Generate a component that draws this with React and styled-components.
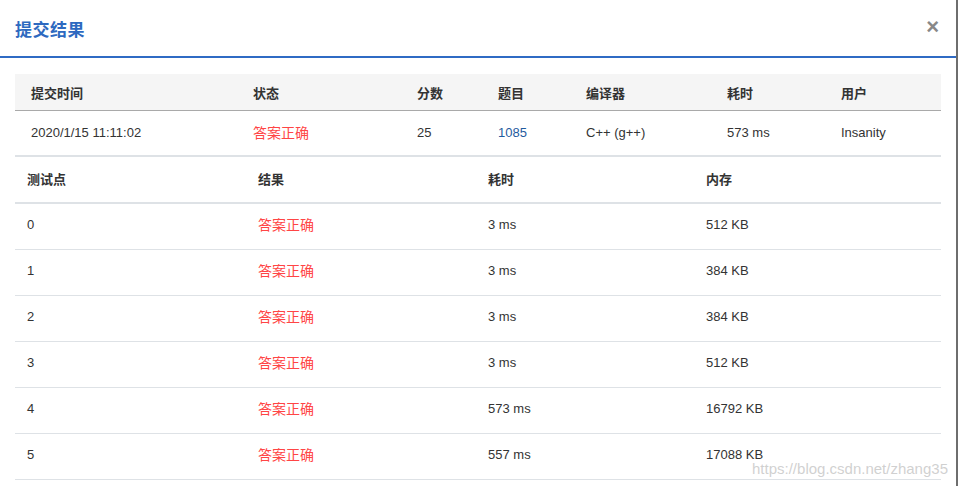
import React from "react";
import styled, { createGlobalStyle } from "styled-components";

const GlobalStyle = createGlobalStyle`
    html, body {
        margin: 0;
        padding: 0;
        background: #fff;
    }
    body {
        font-family: "Liberation Sans", "Noto Sans CJK SC", sans-serif;
        color: #333;
    }
`;

const summaryCols = [222, 164, 81, 88, 141, 114, 116];
const caseCols = [231, 230, 218, 247];

const summary = {
    time: "2020/1/15 11:11:02",
    status: "答案正确",
    score: "25",
    problem: "1085",
    compiler: "C++ (g++)",
    cost: "573 ms",
    user: "Insanity",
};

const cases = [
    { id: 0, time: "3 ms", mem: "512 KB" },
    { id: 1, time: "3 ms", mem: "384 KB" },
    { id: 2, time: "3 ms", mem: "384 KB" },
    { id: 3, time: "3 ms", mem: "512 KB" },
    { id: 4, time: "573 ms", mem: "16792 KB" },
    { id: 5, time: "557 ms", mem: "17088 KB" },
];

function App() {
    return (
        <>
            <GlobalStyle />
            <Modal>
                <Header>
                    <Title>提交结果</Title>
                    <Close>×</Close>
                </Header>
                <Body>
                    <SummaryHead>
                        {["提交时间", "状态", "分数", "题目", "编译器", "耗时", "用户"].map(
                            (t, i) => (
                                <HeadCell key={t} w={summaryCols[i]} pad={16}>
                                    {t}
                                </HeadCell>
                            )
                        )}
                    </SummaryHead>
                    <SummaryRow>
                        <Cell w={summaryCols[0]} pad={16}>{summary.time}</Cell>
                        <Cell w={summaryCols[1]} pad={16} tone="ok">
                            {summary.status}
                        </Cell>
                        <Cell w={summaryCols[2]} pad={16}>{summary.score}</Cell>
                        <Cell w={summaryCols[3]} pad={16} tone="link">
                            {summary.problem}
                        </Cell>
                        <Cell w={summaryCols[4]} pad={16}>{summary.compiler}</Cell>
                        <Cell w={summaryCols[5]} pad={16}>{summary.cost}</Cell>
                        <Cell w={summaryCols[6]} pad={16}>{summary.user}</Cell>
                    </SummaryRow>
                    <CaseHead>
                        {["测试点", "结果", "耗时", "内存"].map((t, i) => (
                            <HeadCell key={t} w={caseCols[i]} pad={12}>
                                {t}
                            </HeadCell>
                        ))}
                    </CaseHead>
                    {cases.map((item) => (
                        <CaseRow key={item.id}>
                            <Cell w={caseCols[0]} pad={12}>{item.id}</Cell>
                            <Cell w={caseCols[1]} pad={12} tone="ok">
                                答案正确
                            </Cell>
                            <Cell w={caseCols[2]} pad={12}>{item.time}</Cell>
                            <Cell w={caseCols[3]} pad={12}>{item.mem}</Cell>
                        </CaseRow>
                    ))}
                </Body>
                <Watermark>https://blog.csdn.net/zhang35</Watermark>
            </Modal>
        </>
    );
}

export default App;

const Modal = styled.div`
    position: relative;
    width: 956px;
    height: 486px;
    border-right: 2px solid #6e6e6e;
    overflow: hidden;
    background: #fff;
`;
const Header = styled.div`
    display: flex;
    align-items: center;
    justify-content: space-between;
    height: 56px;
    padding: 0 15px;
    border-bottom: 2px solid #2f6bc4;
`;
const Title = styled.h4`
    margin: 0;
    font-size: 17px;
    font-weight: bold;
    color: #2d69c0;
    font-family: "Noto Sans CJK SC", sans-serif;
    letter-spacing: 0.5px;
`;
const Close = styled.span`
    font-size: 22px;
    font-weight: bold;
    color: #888;
    line-height: 1;
    margin-right: 2px;
    margin-top: -2px;
`;
const Body = styled.div`
    padding: 16px 15px 0;
    width: 926px;
`;
const Row = styled.div`
    display: flex;
    align-items: center;
    box-sizing: border-box;
`;
const SummaryHead = styled(Row)`
    height: 37px;
    background: #f5f5f5;
    border-bottom: 1px solid #a9a9a9;
`;
const SummaryRow = styled(Row)`
    height: 46px;
    padding-bottom: 2px;
    border-bottom: 2px solid #dee2e6;
`;
const CaseHead = styled(Row)`
    height: 47px;
    padding-bottom: 3px;
    border-bottom: 2px solid #dee2e6;
`;
const CaseRow = styled(Row)`
    height: 46px;
    padding-bottom: 5px;
    border-bottom: 1px solid #dee2e6;
`;
const HeadCell = styled.div`
    width: ${(p) => p.w}px;
    padding-left: ${(p) => p.pad}px;
    box-sizing: border-box;
    font-size: 13px;
    font-weight: bold;
    color: #333;
    font-family: "Noto Sans CJK SC", sans-serif;
`;
const Cell = styled.div`
    width: ${(p) => p.w}px;
    padding-left: ${(p) => p.pad}px;
    box-sizing: border-box;
    font-size: ${(p) => (p.tone === "ok" ? "14px" : "13px")};
    color: ${(p) =>
        p.tone === "ok" ? "#ff4545" : p.tone === "link" ? "#1f5b9e" : "#333"};
    font-family: "Liberation Sans", "Noto Sans CJK SC", sans-serif;
`;
const Watermark = styled.div`
    position: absolute;
    right: 8px;
    bottom: 9px;
    font-size: 15px;
    color: rgba(200, 200, 200, 0.85);
    font-family: "Liberation Sans", sans-serif;
`;
